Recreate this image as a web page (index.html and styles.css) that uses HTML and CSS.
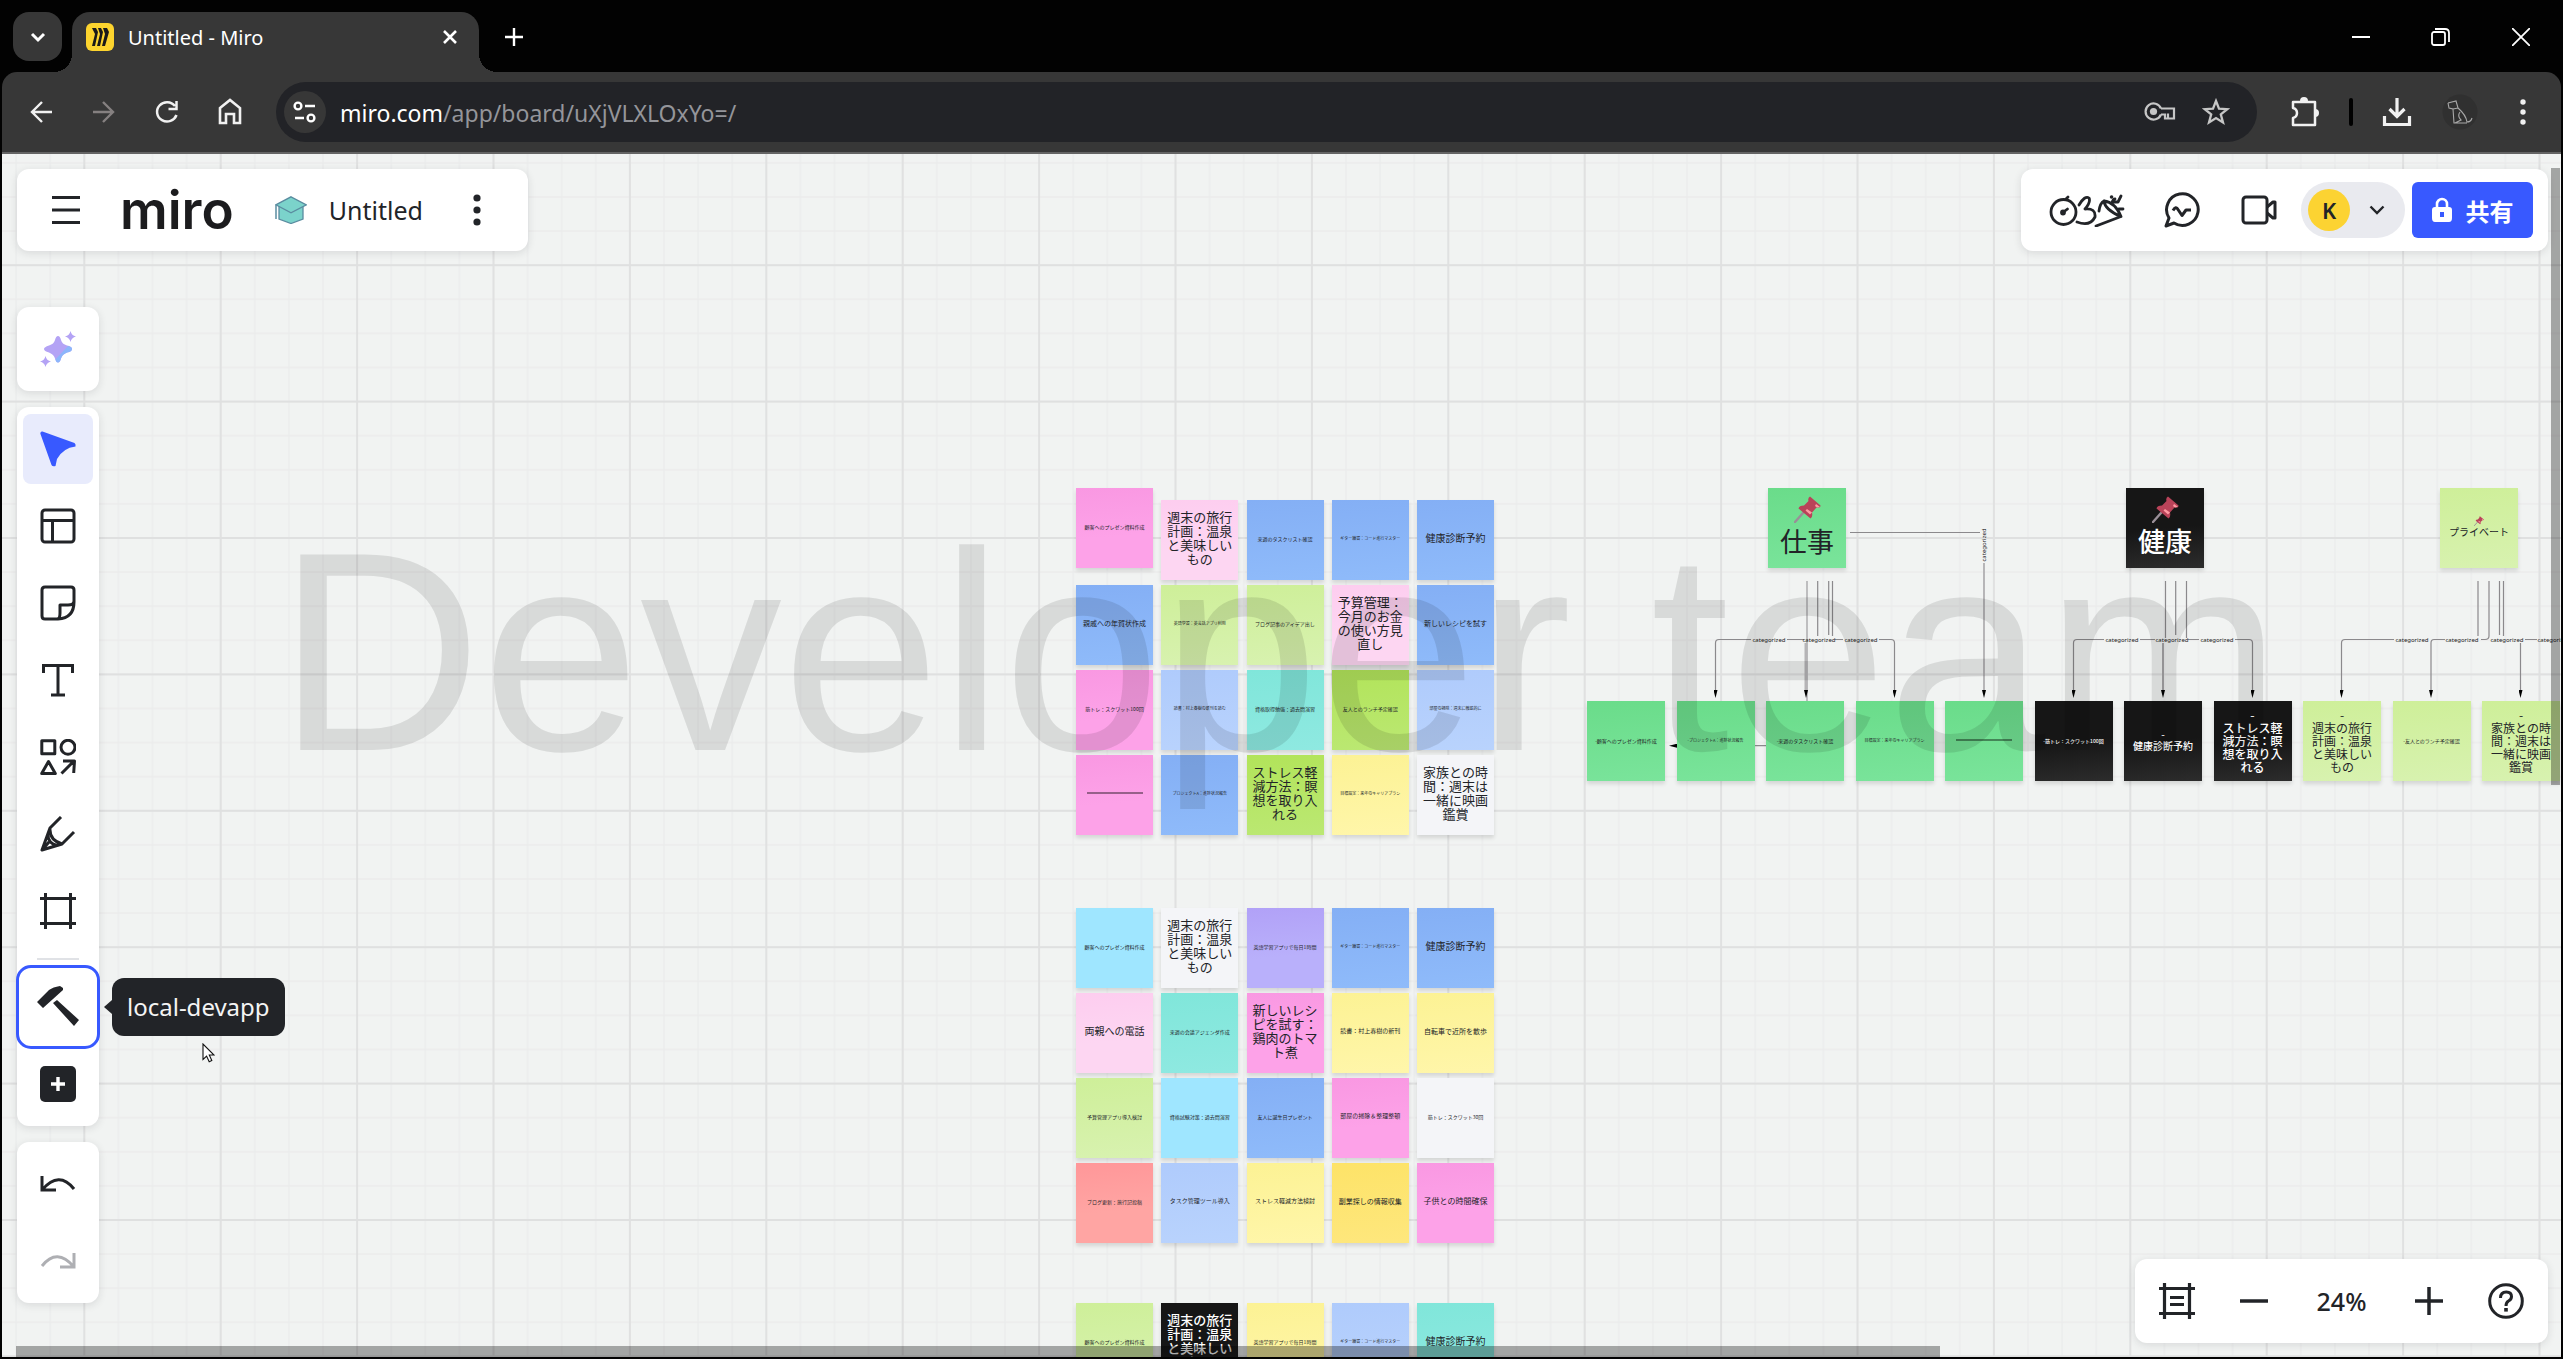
FILE: index.html
```html
<!DOCTYPE html>
<html lang="en">
<head>
<meta charset="utf-8">
<title>Untitled - Miro</title>
<link rel="stylesheet" href="styles.css">
</head>
<body>
<svg class="defs" aria-hidden="true">
  <defs>
    <symbol id="pin" viewBox="0 0 27 27">
      <path d="M1 26 L9 17" stroke="#9a8f98" stroke-width="2.4" stroke-linecap="round"/>
      <path d="M16 0.5 L26.5 9.5 Q27 12 22.5 11.5 L18 16.5 Q19 21 16.5 22.5 L4.5 12.5 Q5 9.5 10 9.5 L14.5 5 Q13.5 2 16 0.5Z" fill="#b94359"/>
      <path d="M13 13 L18 16.5 L16 18.5 L11.5 14.5Z M22 8 L26 11 L23 11.5 L21 10Z" fill="#ff9aa2"/>
    </symbol>
    <marker id="arrow" viewBox="0 0 8 4" refX="0" refY="2" markerWidth="8" markerHeight="4" markerUnits="userSpaceOnUse" orient="auto"><path d="M0 0 L8 2 L0 4Z" fill="#000"/></marker>
  </defs>
</svg>

<div class="tabstrip">
  <button class="tab-search" aria-label="Search tabs"><svg width="18" height="12" viewBox="0 0 18 12"><path d="M3 3l6 6 6-6" fill="none" stroke="#fff" stroke-width="3"/></svg></button>
  <div class="tab">
    <svg class="favicon" width="28" height="28" viewBox="0 0 28 28"><rect width="28" height="28" rx="6" fill="#fdd42e"/><path d="M6 5h4l2 4-3 14H6l3-12zM12 5h3l2 4-3 14h-3l3-12zM17 5h4l2 4-4 14h-3l3-12z" fill="#1a1a1a"/></svg>
    <span class="tab-title">Untitled - Miro</span>
    <button class="tab-close" aria-label="Close tab"><svg width="14" height="14" viewBox="0 0 14 14"><path d="M1 1l12 12M13 1L1 13" stroke="#fff" stroke-width="2.6"/></svg></button>
  </div>
  <button class="tab-new" aria-label="New tab"><svg width="18" height="18" viewBox="0 0 18 18"><path d="M9 0v18M0 9h18" stroke="#fff" stroke-width="2.4"/></svg></button>
  <div class="window-buttons">
    <button aria-label="Minimize"><svg width="18" height="18" viewBox="0 0 18 18"><path d="M0 9h18" stroke="#fff" stroke-width="2"/></svg></button>
    <button aria-label="Restore"><svg width="20" height="18" viewBox="0 0 20 18"><rect x="1" y="4" width="13" height="13" rx="2" fill="none" stroke="#fff" stroke-width="1.8"/><path d="M4 1h10q4 0 4 4v9" fill="none" stroke="#fff" stroke-width="1.8"/></svg></button>
    <button aria-label="Close"><svg width="18" height="18" viewBox="0 0 18 18"><path d="M0 0l18 18M18 0L0 18" stroke="#fff" stroke-width="1.8"/></svg></button>
  </div>
</div>

<div class="toolbar">
  <nav class="nav-buttons">
    <button aria-label="Back"><svg width="24" height="24" viewBox="0 0 24 24"><path d="M23 12H3M13 2L3 12l10 10" fill="none" stroke="#f1f1f1" stroke-width="2.4"/></svg></button>
    <button aria-label="Forward"><svg width="24" height="24" viewBox="0 0 24 24"><path d="M1 12h20M11 2l10 10-10 10" fill="none" stroke="#858080" stroke-width="2.4"/></svg></button>
    <button aria-label="Reload"><svg width="24" height="24" viewBox="0 0 24 24"><path d="M21.5 15A10 9.6 0 1 1 20 6M21.5 1v8h-8" fill="none" stroke="#f1f1f1" stroke-width="2.5"/></svg></button>
    <button aria-label="Home"><svg width="24" height="28" viewBox="0 0 24 28"><path d="M2 10l10-8 10 8v15h-6v-9H8v9H2z" fill="none" stroke="#f1f1f1" stroke-width="2.6"/></svg></button>
  </nav>
  <div class="urlbar">
    <button class="site-info" aria-label="Site information"><svg width="24" height="22" viewBox="0 0 24 22"><g fill="none" stroke="#fff" stroke-width="2.4"><circle cx="5" cy="5" r="3.4"/><path d="M12 5h10M2 17h9"/><circle cx="18" cy="17" r="3.4"/></g></svg></button>
    <a class="url" href="#"><span class="url-host">miro.com</span>/app/board/uXjVLXLOxYo=/</a>
    <button aria-label="Passwords"><svg width="32" height="20" viewBox="0 0 32 20"><path d="M17 6.5h13v10h-6v-5M17 12.5A8 8 0 1 1 17 6.5M17 12.5h4v4h3" fill="none" stroke="#c6c6c6" stroke-width="2.2"/><circle cx="9.5" cy="9.5" r="3.6" fill="#c6c6c6"/></svg></button>
    <button class="bookmark" aria-label="Bookmark"><svg width="28" height="28" viewBox="0 0 28 28"><path d="M14 3l3 7.7 8.2.5-6.4 5.2 2.2 8L14 20l-7 4.400 2.2-8-6.400-5.200 8.200-.5z" fill="none" stroke="#c6c6c6" stroke-width="2.3"/></svg></button>
  </div>
  <div class="browser-actions">
    <button aria-label="Extensions"><svg width="30" height="30" viewBox="0 0 30 30"><path d="M3 5h22v23H3v-7q4-1 4-5t-4-5z" fill="none" stroke="#f1f1f1" stroke-width="2.5" stroke-linejoin="round"/><path d="M10 4a4 4 0 0 1 8 0zM25 12a4 4 0 0 1 0 8z" fill="#f1f1f1"/></svg></button>
    <span class="separator"></span>
    <button aria-label="Downloads"><svg width="30" height="30" viewBox="0 0 30 30"><path d="M15 1v18M7.5 12l7.5 7.500 7.500-7.500M2.500 19v8.500h25V19" fill="none" stroke="#f1f1f1" stroke-width="3.2"/></svg></button>
    <button aria-label="Profile"><svg width="36" height="36" viewBox="0 0 36 36"><circle cx="18" cy="18" r="17.5" fill="#303030"/><path d="M6 9l8-2 2 7q8 7 9 14 4 0 5-4M6 9l1 5 4 1 1 14h13M13 29l6-3q-4-4-1-8M11 15l5-1" fill="none" stroke="#a8a8a8" stroke-width="1.1"/></svg></button>
    <button aria-label="Menu"><svg width="6" height="26" viewBox="0 0 6 26"><g fill="#f1f1f1"><circle cx="3" cy="3" r="2.7"/><circle cx="3" cy="13" r="2.7"/><circle cx="3" cy="23" r="2.7"/></g></svg></button>
  </div>
</div>

<main class="board">
  <svg class="grid-lines" width="100%" height="100%" aria-hidden="true">
    <defs>
      <pattern id="major" width="136.4" height="136.4" patternUnits="userSpaceOnUse" x="81.3" y="110.2"><path d="M1 0v136.4M0 1h136.4" stroke="#dfe0e0" stroke-width="1.8"/></pattern>
      <pattern id="minor" width="34.1" height="34.1" patternUnits="userSpaceOnUse" x="81.3" y="110.2"><path d="M1 0v34.1M0 1h34.1" stroke="#ebecec" stroke-width="1.4"/></pattern>
    </defs>
    <rect width="100%" height="100%" fill="url(#minor)"/>
    <rect width="100%" height="100%" fill="url(#major)"/>
  </svg>

  <svg class="connectors" width="2561" height="1205" viewBox="2 154 2561 1205" aria-hidden="true">
    <g fill="none" stroke="#8b898c" stroke-width="1.2">
      <path d="M1807 581V703" stroke="#b8b8ba" stroke-width="1.8"/>
      <path d="M1817.7 581V636M1828.7 581V635M1832.5 581V636"/>
      <path d="M1751 639.5H1719Q1715.5 639.5 1715.5 643V690" marker-end="url(#arrow)"/>
      <path d="M1787 639.5H1804M1835 639.5H1843M1879 639.5H1891Q1894.5 639.5 1894.5 643V690" marker-end="url(#arrow)"/>
      <path d="M1806 643V690" stroke="#b5b4b6" stroke-width="3" marker-end="url(#arrow)"/>
      <path d="M1850 532.5H1980"/>
      <path d="M1984 563V690" stroke="#b0afb1" stroke-width="1.8" marker-end="url(#arrow)"/>
      <path d="M1770 745.7H1677" marker-end="url(#arrow)"/>
      <path d="M2165.5 581V638M2175.7 581V635M2186.5 581V638"/>
      <path d="M2104 639.5H2077Q2073.5 639.5 2073.5 643V690" marker-end="url(#arrow)"/>
      <path d="M2140 639.5H2155M2188 639.5H2199M2235 639.5H2249Q2252.5 639.5 2252.5 643V690" marker-end="url(#arrow)"/>
      <path d="M2163 643V690" stroke="#a5a4a6" stroke-width="2" marker-end="url(#arrow)"/>
      <path d="M2478 581V636M2489 581V636Q2489 639.5 2485 639.5H2481M2499.5 581V635M2503.5 581V636"/>
      <path d="M2394 639.5H2345Q2341.5 639.5 2341.5 643V690" marker-end="url(#arrow)"/>
      <path d="M2445 639.5H2434Q2431 639.5 2431 643V690" marker-end="url(#arrow)"/>
      <path d="M2525 639.5H2537M2520.5 643V690" marker-end="url(#arrow)"/>
    </g>
    <g class="link-labels">
      <text x="1769" y="642">categorized</text><text x="1819" y="642">categorized</text><text x="1861" y="642">categorized</text>
      <text x="-545" y="1986" transform="rotate(-90)">categorized</text>
      <text x="2122" y="642">categorized</text><text x="2172" y="642">categorized</text><text x="2217" y="642">categorized</text>
      <text x="2412" y="642">categorized</text><text x="2462" y="642">categorized</text><text x="2507" y="642">categorized</text><text x="2554" y="642">categorized</text>
    </g>
  </svg>

  <ul class="notes cluster-a" lang="ja">
    <li class="note pink t5 raised">顧客へのプレゼン資料作成</li>
    <li class="note rose t13">週末の旅行計画：温泉と美味しいもの</li>
    <li class="note blue t5">来週のタスクリスト確認</li>
    <li class="note blue t4">ギター練習：コード進行マスター</li>
    <li class="note blue t10">健康診断予約</li>
    <li class="note blue t7">親戚への年賀状作成</li>
    <li class="note lime t4">英語学習：英会話アプリ利用</li>
    <li class="note lime t5">ブログ記事のアイデア出し</li>
    <li class="note rose t13">予算管理：今月のお金の使い方見直し</li>
    <li class="note blue t7">新しいレシピを試す</li>
    <li class="note pink t5">筋トレ：スクワット100回</li>
    <li class="note sky t4">読書：村上春樹の新刊を読む</li>
    <li class="note teal t5">資格取得勉強：過去問演習</li>
    <li class="note green t5">友人とのランチ予定確認</li>
    <li class="note sky t4">部屋の掃除：週末に徹底的に</li>
    <li class="note pink"><span class="tiny-line"></span></li>
    <li class="note blue t4">プロジェクトA：進捗状況報告</li>
    <li class="note green t13">ストレス軽減方法：瞑想を取り入れる</li>
    <li class="note yellow t4">目標設定：来年のキャリアプラン</li>
    <li class="note white t13">家族との時間：週末は一緒に映画鑑賞</li>
  </ul>

  <ul class="notes cluster-b" lang="ja">
    <li class="note cyan t5">顧客へのプレゼン資料作成</li>
    <li class="note white t13">週末の旅行計画：温泉と美味しいもの</li>
    <li class="note violet t5">英語学習アプリで毎日1時間</li>
    <li class="note blue t4">ギター練習：コード進行マスター</li>
    <li class="note blue t10">健康診断予約</li>
    <li class="note rose t10">両親への電話</li>
    <li class="note teal t5">来週の会議アジェンダ作成</li>
    <li class="note pink t13">新しいレシピを試す：鶏肉のトマト煮</li>
    <li class="note yellow t6">読書：村上春樹の新刊</li>
    <li class="note yellow t7">自転車で近所を散歩</li>
    <li class="note lime t5">予算管理アプリ導入検討</li>
    <li class="note cyan t5">資格試験対策：過去問演習</li>
    <li class="note blue t5">友人に誕生日プレゼント</li>
    <li class="note pink t6">部屋の掃除＆整理整頓</li>
    <li class="note white t5">筋トレ：スクワット30回</li>
    <li class="note red t5">ブログ更新：旅行記投稿</li>
    <li class="note sky t6">タスク管理ツール導入</li>
    <li class="note yellow t6">ストレス軽減方法検討</li>
    <li class="note gold t7">副業探しの情報収集</li>
    <li class="note pink t8">子供との時間確保</li>
  </ul>

  <ul class="notes cluster-c" lang="ja">
    <li class="note lime t5">顧客へのプレゼン資料作成</li>
    <li class="note black t13">週末の旅行計画：温泉と美味しいもの</li>
    <li class="note yellow t5">英語学習アプリで毎日1時間</li>
    <li class="note sky t4">ギター練習：コード進行マスター</li>
    <li class="note teal t10">健康診断予約</li>
  </ul>

  <div class="note head head-work emerald" lang="ja"><svg width="27" height="27"><use href="#pin"/></svg>仕事</div>
  <div class="note head head-health black" lang="ja"><svg width="27" height="27"><use href="#pin"/></svg>健康</div>
  <div class="note head head-private lime t10" lang="ja"><svg width="10" height="10"><use href="#pin"/></svg>プライベート</div>

  <ul class="notes-row" lang="ja">
    <li class="note emerald t5">-顧客へのプレゼン資料作成</li>
    <li class="note emerald t4">-プロジェクトA：進捗状況報告</li>
    <li class="note emerald t5">-来週のタスクリスト確認</li>
    <li class="note emerald t4">目標設定：来年のキャリアプラン</li>
    <li class="note emerald"><span class="tiny-line"></span></li>
    <li class="note black t5">-筋トレ：スクワット100回</li>
    <li class="note black t10">-<br>健康診断予約</li>
    <li class="note black t12">-<br>ストレス軽減方法：瞑想を取り入れる</li>
    <li class="note lime t12">-<br>週末の旅行計画：温泉と美味しいもの</li>
    <li class="note lime t5">-友人とのランチ予定確認</li>
    <li class="note lime t12">-<br>家族との時間：週末は一緒に映画鑑賞</li>
  </ul>

  <div class="watermark">Developer team</div>

  <div class="ui">
    <header class="topbar">
      <div class="card board-card">
        <button class="icon-btn" aria-label="Main menu"><svg width="28" height="28" viewBox="0 0 28 28"><path d="M0 1.5h28M0 14h28M0 26.5h28" stroke="#222428" stroke-width="3"/></svg></button>
        <a class="logo" href="#">miro</a>
        <svg class="cap" width="32" height="28" viewBox="0 0 32 28"><path d="M4 10v13l12 4.500L28 23V10" fill="#7bd3cb" stroke="#5a8ca0" stroke-width="1.3"/><path d="M16 .8L31.4 8.8 16 16.8.8 8.8z" fill="#7bd3cb" stroke="#5a8ca0" stroke-width="1.3"/><path d="M1 9v14" stroke="#5a8ca0" stroke-width="1.5"/></svg>
        <button class="board-name">Untitled</button>
        <button class="icon-btn more" aria-label="Board options"><svg width="8" height="32" viewBox="0 0 8 32"><g fill="#222428"><circle cx="4" cy="4" r="3.6"/><circle cx="4" cy="16" r="3.6"/><circle cx="4" cy="28" r="3.6"/></g></svg></button>
      </div>
      <div class="card share-card">
        <button class="icon-btn activities" aria-label="Activities"><svg width="76" height="34" viewBox="0 0 76 34"><g fill="none" stroke="#222428" stroke-width="2.8" stroke-linecap="round" stroke-linejoin="round"><circle cx="14.5" cy="19" r="12.5"/><path d="M17 6l2-2M14.5 19l4-3"/><path d="M30 12Q36 2 40 5q2 4-4 11 11-1 10 8-5 10-18 5"/><path d="M50 18Q51 10 55 8M72 23.5L47 33M55 8q1 9 17 15.500Q66 9 55 8M63 10q1-4 3-4M65 9l4 0 3-6M70 16h4"/><circle cx="14" cy="19.5" r="1.5"/><path d="M62.5 4h.1" stroke-width="3.5"/></g></svg></button>
        <button class="icon-btn" aria-label="Comments"><svg width="36" height="36" viewBox="0 0 36 36"><g fill="none" stroke="#222428" stroke-width="3" stroke-linejoin="round"><path d="M5 26A15.8 15.8 0 1 1 10 31L2 34z"/><path d="M9 18.5q3-5 5-1l4 6 4-5.500h5"/></g></svg></button>
        <button class="icon-btn" aria-label="Video chat"><svg width="36" height="30" viewBox="0 0 36 30"><g fill="none" stroke="#222428" stroke-width="3" stroke-linejoin="round"><rect x="2" y="2" width="24" height="26" rx="3"/><path d="M26 12l6-5h2v16h-2l-6-5"/></g></svg></button>
        <button class="user-pill" aria-label="Account"><span class="avatar">K</span><svg width="16" height="10" viewBox="0 0 16 10"><path d="M1.5 1.5L8 8l6.5-6.5" fill="none" stroke="#222428" stroke-width="2.4"/></svg></button>
        <button class="share" lang="ja"><svg width="20" height="26" viewBox="0 0 20 26"><path d="M5 12V7a5 5 0 0 1 10 0v5" fill="none" stroke="#fff" stroke-width="2.6"/><path d="M3 10h14q3 0 3 3v8q0 4-3 4H3q-3 0-3-4v-8q0-3 3-3zM8 15v5h4v-5z" fill="#fff" fill-rule="evenodd"/></svg>共有</button>
      </div>
    </header>

    <div class="lower">
      <aside class="tools">
        <div class="card tool-card">
          <button class="icon-btn" aria-label="Miro AI"><svg width="36" height="36" viewBox="0 0 36 36"><path d="M18 5q2 0 3 4 1 4 6 5.500 5 1 5 3.500t-5 3.500q-5 2-6 6-1 4-3 4t-3-4q-1-4-6-6-5-1.500-5-3.500t5-3.500q5-1.500 6-5.500 1-4 3-4z" fill="#b4a3f5"/><path d="M28 15q4 .5 4 3t-5 3.500q-5 2-6 6-1 4-3 4-2 0-2.600-3z" fill="#8cb6fb"/><path d="M30.500 0q1 4.500 5.500 5.500-4.500 1-5.500 5.500-1-4.500-5.500-5.500 4.500-1 5.500-5.500zM5.500 25q1 4.500 5.500 5.500-4.500 1-5.500 5.500-1-4.500-5.500-5.500 4.500-1 5.500-5.500z" fill="#b4a3f5"/></svg></button>
        </div>
        <div class="card tool-card">
          <button class="icon-btn active" aria-label="Select"><svg width="36" height="36" viewBox="0 0 36 36"><path d="M2.5.5L34.5 12q1.500 1 1 3.500Q23 17 17 28l-1.500 7q-3 1-4-1L.3 2.500Q.5 0 2.500.5z" fill="#3859ff"/></svg></button>
          <button class="icon-btn" aria-label="Templates"><svg width="36" height="36" viewBox="0 0 36 36"><g fill="none" stroke="#222428" stroke-width="3"><rect x="2" y="2" width="32" height="32" rx="3"/><path d="M2 12.5h32M12.5 12.5V34"/></g></svg></button>
          <button class="icon-btn" aria-label="Sticky note"><svg width="36" height="36" viewBox="0 0 36 36"><path d="M34 17V5q0-3-3-3H5Q2 2 2 5v26q0 3 3 3h13q16-1 16-17zM17 34q3 0 3-6v-8h8q6 0 6-4" fill="none" stroke="#222428" stroke-width="3" stroke-linejoin="round"/></svg></button>
          <button class="icon-btn" aria-label="Text"><svg width="36" height="36" viewBox="0 0 36 36"><path d="M3.5 11V3.500h29V11M18 3.500v30M11 33h14" fill="none" stroke="#222428" stroke-width="3"/></svg></button>
          <button class="icon-btn" aria-label="Shapes"><svg width="36" height="36" viewBox="0 0 36 36"><g fill="none" stroke="#222428" stroke-width="3" stroke-linejoin="round"><rect x="1.8" y="1.8" width="13" height="13"/><circle cx="28" cy="8.3" r="7"/><path d="M8.5 22.500l6.800 12H1.700zM21.500 34.500L34 22M23 22h11.500l-.8 12"/></g></svg></button>
          <button class="icon-btn" aria-label="Pen"><svg width="36" height="36" viewBox="0 0 36 36"><path d="M21 1L10 12 2 34l20-6L34 16M8 19.500Q8 27 17 29.500M10 12q-1 12 12 16M2 34l7-8" fill="none" stroke="#222428" stroke-width="3" stroke-linejoin="round"/></svg></button>
          <button class="icon-btn" aria-label="Frame"><svg width="36" height="36" viewBox="0 0 36 36"><path d="M5.5 0v36M30.500 0v36M0 5.500h36M0 30.500h36" stroke="#222428" stroke-width="3"/></svg></button>
          <hr class="tool-divider">
          <div class="app-slot">
            <button class="icon-btn focused" aria-describedby="app-tip" aria-label="local-devapp"><svg width="42" height="42" viewBox="0 0 42 42"><path d="M0 16L12 4q4-3 11-4l3 2v2L6 22zM16 17l4-3 22 20-5 6z" fill="#222428"/></svg></button>
            <div class="tooltip" id="app-tip" role="tooltip">local-devapp</div>
          </div>
          <button class="icon-btn" aria-label="More apps"><svg width="36" height="36" viewBox="0 0 36 36"><rect width="36" height="36" rx="5" fill="#222428"/><path d="M18 11v14M11 18h14" stroke="#fff" stroke-width="3.4"/></svg></button>
        </div>
        <div class="card tool-card">
          <button class="icon-btn" aria-label="Undo"><svg width="36" height="36" viewBox="0 0 36 36"><path d="M2 10v14h14M2 24Q19 4 34 23" fill="none" stroke="#222428" stroke-width="3"/></svg></button>
          <button class="icon-btn" aria-label="Redo" disabled><svg width="36" height="36" viewBox="0 0 36 36"><path d="M34 10v14H20M34 24Q17 4 2 23" fill="none" stroke="#aeafb3" stroke-width="3"/></svg></button>
        </div>
      </aside>
      <div class="card zoom-card">
        <button class="icon-btn" aria-label="Frames"><svg width="36" height="36" viewBox="0 0 36 36"><path d="M5.5 0v36M30.500 0v36M0 5.500h36M0 30.500h36M11 14.500h14M11 21.500h14" stroke="#222428" stroke-width="3.2"/></svg></button>
        <button class="icon-btn" aria-label="Zoom out"><svg width="28" height="28" viewBox="0 0 28 28"><path d="M0 14h28" stroke="#222428" stroke-width="3.5"/></svg></button>
        <button class="zoom-level">24%</button>
        <button class="icon-btn" aria-label="Zoom in"><svg width="28" height="28" viewBox="0 0 28 28"><path d="M0 14h28M14 0v28" stroke="#222428" stroke-width="3.5"/></svg></button>
        <button class="icon-btn" aria-label="Help"><svg width="36" height="36" viewBox="0 0 36 36"><g fill="none" stroke="#222428" stroke-width="3"><circle cx="18" cy="18" r="16.3"/><path d="M12.5 15q0-6 5.800-6 5.200 0 5.200 4.500 0 3-3 4.500-2.500 1.500-2.500 5"/></g><rect x="16.2" y="25" width="3.6" height="3.6" fill="#222428"/></svg></button>
      </div>
    </div>
  </div>

  <div class="scroll scroll-v"></div>
  <div class="scroll scroll-h"></div>
  <svg class="cursor" width="13" height="20" viewBox="0 0 13 20" aria-hidden="true"><path d="M1 1v15.500l3.600-3.400 2.600 5.600 2.600-1.200-2.500-5.500H12z" fill="#fff" stroke="#111" stroke-width="1.1"/></svg>
</main>
</body>
</html>
```
FILE: styles.css
```css
* { box-sizing: border-box; }

body {
  margin: 0;
  height: 100vh;
  display: flex;
  flex-direction: column;
  padding: 0 2px 2px;
  background: #020202;
  color: #222428;
  font-family: "Noto Sans", "Noto Sans CJK JP", sans-serif;
  overflow: hidden;
}

button {
  display: flex;
  align-items: center;
  justify-content: center;
  padding: 0;
  border: 0;
  background: none;
  color: inherit;
  font: inherit;
}

a { color: inherit; text-decoration: none; }
svg { display: block; flex: none; }
ul { margin: 0; padding: 0; list-style: none; }
.defs { position: absolute; width: 0; height: 0; }

/* Browser tab strip */
.tabstrip {
  flex: none;
  display: flex;
  align-items: flex-start;
  height: 72px;
  padding: 12px 0 0 11px;
}
.tab-search {
  width: 49px;
  height: 49px;
  border-radius: 16px;
  background: #373737;
}
.tab {
  position: relative;
  display: flex;
  align-items: center;
  width: 407px;
  height: 60px;
  margin-left: 10px;
  padding: 0 22px 10px 14px;
  border-radius: 18px 18px 0 0;
  background: #373737;
  color: #fff;
}
.tab::before,
.tab::after {
  content: "";
  position: absolute;
  bottom: 0;
  width: 18px;
  height: 18px;
}
.tab::before { right: 100%; background: radial-gradient(circle at 0 0, transparent 18px, #373737 18px); }
.tab::after { left: 100%; background: radial-gradient(circle at 100% 0, transparent 18px, #373737 18px); }
.tab-title { flex: 1; margin-left: 14px; padding-top: 2px; font-size: 20px; line-height: 28px; }
.tab-new { width: 48px; height: 50px; margin-left: 11px; }
.window-buttons { display: flex; margin-left: auto; }
.window-buttons button { width: 80px; height: 50px; }

/* Browser toolbar */
.toolbar {
  flex: none;
  display: flex;
  align-items: center;
  height: 82px;
  padding: 0 14px 0 15px;
  border-bottom: 2px solid #646464;
  border-radius: 15px 15px 0 0;
  background: #373737;
}
.nav-buttons { display: flex; gap: 15px; }
.nav-buttons button,
.browser-actions button { width: 48px; height: 48px; }
.urlbar {
  flex: 1;
  display: flex;
  align-items: center;
  height: 60px;
  margin: 0 24px 0 22px;
  padding: 0 21px 0 8px;
  border-radius: 30px;
  background: #222327;
}
.urlbar button { width: 40px; height: 40px; }
.urlbar .site-info { width: 42px; height: 42px; border-radius: 50%; background: #373737; }
.urlbar .bookmark { margin-left: 16px; }
.url { flex: 1; margin-left: 14px; padding-top: 1px; color: #94959a; font-size: 23px; line-height: 32px; }
.url-host { color: #fff; }
.browser-actions { display: flex; align-items: center; gap: 15px; }
.separator { width: 4px; height: 28px; margin: 0 5px; border-radius: 2px; background: #000; }

/* Board canvas */
.board {
  position: relative;
  flex: 1;
  min-height: 0;
  overflow: hidden;
  background: #f1f3f2;
}
.grid-lines,
.connectors { position: absolute; left: 0; top: 0; }
.link-labels { fill: #222; font-size: 6px; text-anchor: middle; }

.notes {
  position: absolute;
  left: 1074px;
  display: grid;
  grid-template-columns: repeat(5, 77px);
  justify-content: space-between;
  row-gap: 5px;
  width: 418px;
}
.cluster-a { top: 346px; }
.cluster-b { top: 754px; }
.cluster-c { top: 1149px; }
.notes-row {
  position: absolute;
  left: 1585px;
  top: 547px;
  display: flex;
  justify-content: space-between;
  width: 973px;
}
.note {
  display: flex;
  flex-direction: column;
  align-items: center;
  justify-content: center;
  width: 77px;
  height: 80px;
  padding: 0 6px 4px;
  font-family: "Noto Sans CJK JP", sans-serif;
  text-align: center;
  box-shadow: 0 3px 4px rgba(0, 0, 0, 0.12);
}
.notes-row .note { display: grid; place-content: center; width: 78px; padding-bottom: 2px; }
.raised { align-self: start; margin-top: -12px; }
.head { position: absolute; top: 334px; width: 78px; padding-bottom: 2px; font-size: 27px; line-height: 36px; }
.head-work { left: 1766px; }
.head-health { left: 2124px; }
.head-private { left: 2438px; }
.tiny-line { width: 56px; height: 2px; background: rgba(0, 0, 0, 0.4); }

.t4 { font-size: 4px; line-height: 6px; white-space: nowrap; }
.t5 { font-size: 5px; line-height: 7px; white-space: nowrap; }
.t6 { font-size: 6px; line-height: 8px; }
.t7 { font-size: 7px; line-height: 9px; white-space: nowrap; }
.t8 { font-size: 8px; line-height: 10px; white-space: nowrap; }
.t10 { font-size: 10px; line-height: 12px; }
.t12 { font-size: 12px; line-height: 13px; padding-left: 9px; padding-right: 9px; }
.t13 { font-size: 13px; line-height: 14px; }

.pink { background: linear-gradient(175deg, #fda2e8 40%, #f998e2); }
.pink { background: linear-gradient(175deg, #f998e2, #fda2e8 60%); }
.rose { background: linear-gradient(175deg, #fdcdef, #fdd6f2 60%); }
.blue { background: linear-gradient(175deg, #84aff5, #8fbbfa); }
.sky { background: linear-gradient(175deg, #afcbfc, #b9d3fd); }
.cyan { background: #9fe6ff; }
.teal { background: linear-gradient(175deg, #80e6da, #8fe9e1); }
.lime { background: linear-gradient(175deg, #ceef99, #d8f2b0); }
.green { background: linear-gradient(175deg, #b2e45a, #bbe873); }
.emerald { background: linear-gradient(175deg, #6adc8a, #7ae49b); }
.yellow { background: linear-gradient(175deg, #fcf294, #fff6aa); }
.gold { background: linear-gradient(175deg, #fde368, #fee77d); }
.red { background: linear-gradient(175deg, #ff9799, #ffa5a3 60%); }
.violet { background: linear-gradient(175deg, #b1a1f7, #b9b0fb 60%); }
.white { background: #f4f5f8; }
.black { background: linear-gradient(175deg, #161616 50%, #2c2c2c); color: #fff; font-weight: 500; }

.watermark {
  position: absolute;
  left: 275px;
  top: 334px;
  font-family: "Liberation Sans", sans-serif;
  font-size: 284px;
  line-height: 328px;
  white-space: nowrap;
  color: rgba(0, 0, 0, 0.1);
}

/* Interface over the canvas */
.ui {
  position: absolute;
  inset: 0;
  display: flex;
  flex-direction: column;
  padding: 15px 13px 14px 15px;
}
.card { display: flex; border-radius: 12px; background: #fff; box-shadow: 0 2px 8px rgba(34, 36, 40, 0.12); }
.icon-btn { width: 70px; height: 70px; border-radius: 8px; }
.topbar { display: flex; justify-content: space-between; }
.board-card,
.share-card { align-items: center; height: 82px; }
.board-card { padding: 0 16px 0 14px; }
.logo { margin-left: 19px; font-family: "Inter", sans-serif; font-weight: 600; font-size: 53px; line-height: 64px; color: #1c1c1e; }
.cap { margin-left: 41px; }
.board-name { margin-left: 22px; font-size: 25px; line-height: 34px; }
.more { margin-left: 19px; }
.share-card { gap: 7px; padding: 0 15px 0 13px; }
.activities { width: 106px; }
.user-pill {
  justify-content: flex-start;
  gap: 19px;
  width: 104px;
  height: 56px;
  padding-left: 7px;
  border-radius: 28px;
  background: #e9eaef;
}
.avatar {
  width: 42px;
  height: 42px;
  border-radius: 50%;
  background: #fcd332;
  font-size: 22px;
  line-height: 42px;
  font-weight: 600;
  text-align: center;
}
.share {
  gap: 14px;
  width: 121px;
  height: 56px;
  border-radius: 6px;
  background: #3859ff;
  color: #fff;
  font-family: "Noto Sans CJK JP", sans-serif;
  font-size: 24px;
  font-weight: 700;
}

.lower { flex: 1; display: flex; justify-content: space-between; align-items: flex-start; padding-top: 56px; }
.tools { display: flex; flex-direction: column; gap: 16px; width: 82px; }
.tool-card { flex-direction: column; align-items: center; gap: 7px; padding: 7px 0; }
.active { background: #e8ebfc; }
.tool-divider { width: 42px; height: 2px; margin: 5px 0; border: 0; background: #e0e2e6; }
.app-slot { position: relative; }
.focused { border-radius: 8px; outline: 3px solid #3859ff; outline-offset: 4px; }
.tooltip {
  position: absolute;
  left: 89px;
  top: 6px;
  padding: 12px 15px;
  border-radius: 12px;
  background: #222428;
  color: #f4f4f4;
  font-size: 24px;
  line-height: 34px;
  white-space: nowrap;
}
.tooltip::before {
  content: "";
  position: absolute;
  left: -8px;
  top: 22px;
  border: 7px solid transparent;
  border-left-width: 0;
  border-right: 8px solid #222428;
}
.zoom-card { align-self: flex-end; align-items: center; gap: 7px; padding: 7px; }
.zoom-level { width: 91px; height: 70px; font-size: 25px; font-weight: 500; }

.scroll { position: absolute; background: rgba(0, 0, 0, 0.32); }
.scroll-v { right: 1px; top: 14px; width: 9px; height: 617px; }
.scroll-h { left: 14px; bottom: 0; width: 1924px; height: 11px; }
.cursor { position: absolute; left: 200px; top: 889px; }
```
